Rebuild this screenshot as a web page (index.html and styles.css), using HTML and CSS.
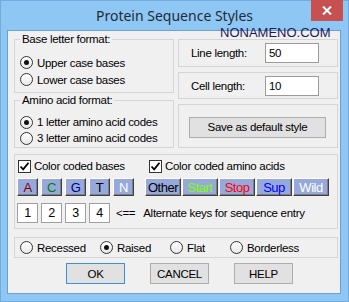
FILE: index.html
```html
<!DOCTYPE html>
<html lang="en">
<head>
    <meta charset="UTF-8">
    <title>Protein Sequence Styles</title>
    <link rel="stylesheet" href="styles.css">
</head>
<body>
    <div class="window">
        <!-- barra de titulo -->
        <div class="titlebar">
            <span class="title">Protein Sequence Styles</span>
            <span class="close">
                <svg width="10" height="9" viewBox="0 0 10 9"><path d="M1 0.5 L9 8.5 M9 0.5 L1 8.5" stroke="#fff" stroke-width="2"/></svg>
            </span>
        </div>

        <div class="client">
            <div class="top">
                <div class="col">
                    <fieldset class="group g-base">
                        <legend>Base letter format:</legend>
                        <div class="opt tall"><span class="radio on"></span>Upper case bases</div>
                        <div class="opt tall"><span class="radio"></span>Lower case bases</div>
                    </fieldset>
                    <fieldset class="group g-amino">
                        <legend>Amino acid format:</legend>
                        <div class="opt"><span class="radio on"></span>1 letter amino acid codes</div>
                        <div class="opt"><span class="radio"></span>3 letter amino acid codes</div>
                    </fieldset>
                </div>
                <div class="col col-right">
                    <div class="box box-line">
                        <span class="lbl">Line length:</span>
                        <span class="field">50</span>
                    </div>
                    <div class="box box-cell">
                        <span class="lbl">Cell length:</span>
                        <span class="field">10</span>
                    </div>
                    <div class="box box-save">
                        <span class="btn btn-save">Save as default style</span>
                    </div>
                </div>
            </div>

            <div class="panel">
                <div class="checks">
                    <div class="opt chk-bases"><span class="check"><svg width="11" height="11" viewBox="0 0 11 11"><path d="M1.5 5.5 L4.2 8.3 L9.5 1.8" fill="none" stroke="#000" stroke-width="1.8"/></svg></span>Color coded bases</div>
                    <div class="opt"><span class="check"><svg width="11" height="11" viewBox="0 0 11 11"><path d="M1.5 5.5 L4.2 8.3 L9.5 1.8" fill="none" stroke="#000" stroke-width="1.8"/></svg></span>Color coded amino acids</div>
                </div>
                <div class="keys">
                    <span class="key k-a">A</span>
                    <span class="key k-c">C</span>
                    <span class="key k-g">G</span>
                    <span class="key k-t">T</span>
                    <span class="key k-n">N</span>
                    <span class="key wide k-other">Other</span>
                    <span class="key wide k-start">Start</span>
                    <span class="key wide k-stop">Stop</span>
                    <span class="key wide k-sup">Sup</span>
                    <span class="key wide k-wild">Wild</span>
                </div>
                <div class="alt">
                    <span class="num">1</span>
                    <span class="num">2</span>
                    <span class="num">3</span>
                    <span class="num">4</span>
                    <span class="arrow">&lt;==</span>
                    <span>Alternate keys for sequence entry</span>
                </div>
            </div>

            <div class="styles">
                <div class="opt"><span class="radio"></span>Recessed</div>
                <div class="opt"><span class="radio on"></span>Raised</div>
                <div class="opt"><span class="radio"></span>Flat</div>
                <div class="opt"><span class="radio"></span>Borderless</div>
            </div>

            <div class="actions">
                <span class="btn btn-ok">OK</span>
                <span class="btn">CANCEL</span>
                <span class="btn">HELP</span>
            </div>
        </div>

        <div class="watermark">NONAMENO.COM</div>
    </div>
</body>
</html>
```

FILE: styles.css
```css
body{
    margin:0;
    font-family:"Liberation Sans", Arial, sans-serif;
    font-size:11.5px;
    letter-spacing:-0.3px;
    color:#000;
}
.window{
    position:relative;
    width:349px;
    height:302px;
    box-sizing:border-box;
    background:#8fc7f4;
    border:1px solid #74aade;
}
/* barra de titulo */
.titlebar{
    height:29px;
    display:grid;
    grid-template-columns:1fr auto 1fr;
    align-items:center;
}
.title{
    grid-column:2;
    font-family:"Noto Sans", sans-serif;
    font-size:14px;
    letter-spacing:0;
    color:#1e2b38;
}
.close{
    grid-column:3;
    justify-self:end;
    align-self:start;
    margin:-1px 5px 0 0;
    width:32px;
    height:21px;
    background:#c75050;
    display:flex;
    align-items:center;
    justify-content:center;
}
.client{
    margin-left:6px;
    width:334px;
    height:264px;
    box-sizing:border-box;
    background:#f0f0f0;
    border:1px solid #6f9fd0;
    padding:1px 2px 0 6px;
}
.top{
    display:flex;
    gap:4px;
}
.col{
    width:160px;
    display:flex;
    flex-direction:column;
}
.group{
    margin:0;
    min-width:0;
    border:1px solid #d5d5d5;
    padding:0 5px;
}
.group legend{
    padding:0 2px;
    line-height:14px;
}
.g-base{ padding-top:8px; padding-bottom:4px; }
.g-amino{ padding-top:7px; padding-bottom:1px; }
.opt{
    display:flex;
    align-items:center;
    height:16px;
    white-space:nowrap;
}
.opt.tall{ height:17px; }
.radio{
    width:13px;
    height:13px;
    box-sizing:border-box;
    border:1px solid #333;
    border-radius:50%;
    background:linear-gradient(#fff,#e8e8e8);
    margin-right:4px;
    flex:none;
    display:flex;
    align-items:center;
    justify-content:center;
}
.radio.on::after{
    content:"";
    width:5px;
    height:5px;
    border-radius:50%;
    background:#111;
}
.check{
    width:13px;
    height:13px;
    box-sizing:border-box;
    border:1px solid #333;
    background:#fff;
    margin-right:3px;
    flex:none;
    display:flex;
    align-items:center;
    justify-content:center;
}
.col-right{
    margin-top:7px;
    gap:5px;
}
.box{
    border:1px solid #d5d5d5;
    box-sizing:border-box;
    display:flex;
    align-items:center;
}
.box-line{ height:28px; padding-left:12px; }
.box-cell{ height:27px; padding-left:12px; }
.box-save{ height:44px; justify-content:center; }
.lbl{ width:74px; }
.field{
    width:54px;
    height:20px;
    box-sizing:border-box;
    background:#fff;
    border:1px solid #9a9a9a;
    padding-left:3px;
    line-height:18px;
}
.btn{
    box-sizing:border-box;
    height:21px;
    width:59px;
    background:#e1e1e1;
    border:1px solid #adadad;
    display:flex;
    align-items:center;
    justify-content:center;
}
.btn-save{ width:137px; margin-left:-1px; margin-top:2px; }
.btn-ok{ border-color:#3c8ee0; }
.panel{
    margin-top:6px;
    height:75px;
    box-sizing:border-box;
    border:1px solid #d5d5d5;
    padding:3px 0 0 2px;
}
.checks{
    display:flex;
    height:15px;
}
.chk-bases{ width:131px; margin-left:1px; }
.keys{
    display:flex;
    margin-top:5px;
    gap:3px;
}
.key{
    width:21px;
    height:18px;
    box-sizing:border-box;
    background:#97a8dc;
    border-top:1px solid #fff;
    border-left:1px solid #fff;
    border-right:1px solid #404040;
    border-bottom:1px solid #404040;
    box-shadow:inset -1px -1px #7f7f7f;
    display:flex;
    align-items:center;
    justify-content:center;
    font-size:13px;
    letter-spacing:-0.5px;
}
.key.wide{ width:36px; }
.keys .k-other{ margin-left:8px; }
.keys .wide + .wide{ margin-left:-2px; }
.k-a{ color:#800000; }
.k-c{ color:#008000; }
.k-g{ color:#000080; }
.k-t{ color:#000; }
.k-n{ color:#fff; }
.k-other{ color:#000; }
.k-start{ color:#80ff00; }
.k-stop{ color:#ff0000; }
.k-sup{ color:#0000ff; }
.k-wild{ color:#fff; }
.alt{
    display:flex;
    align-items:center;
    margin-top:7px;
    gap:3px;
}
.num{
    width:21px;
    height:20px;
    box-sizing:border-box;
    background:#fff;
    border:1px solid #a0a0a0;
    display:flex;
    align-items:center;
    justify-content:center;
    font-size:12.5px;
}
.arrow{ margin:0 5px 0 3px; }
.styles{
    margin-top:8px;
    height:21px;
    box-sizing:border-box;
    border:1px solid #d5d5d5;
    padding-left:5px;
    display:grid;
    grid-template-columns:80px 70px 60px auto;
    align-items:center;
}
.actions{
    margin:5px 0 0 52px;
    display:flex;
    gap:25px;
}
.watermark{
    position:absolute;
    left:219px;
    top:24px;
    font-size:13px;
    letter-spacing:0;
    color:#1c1b5c;
}
```
